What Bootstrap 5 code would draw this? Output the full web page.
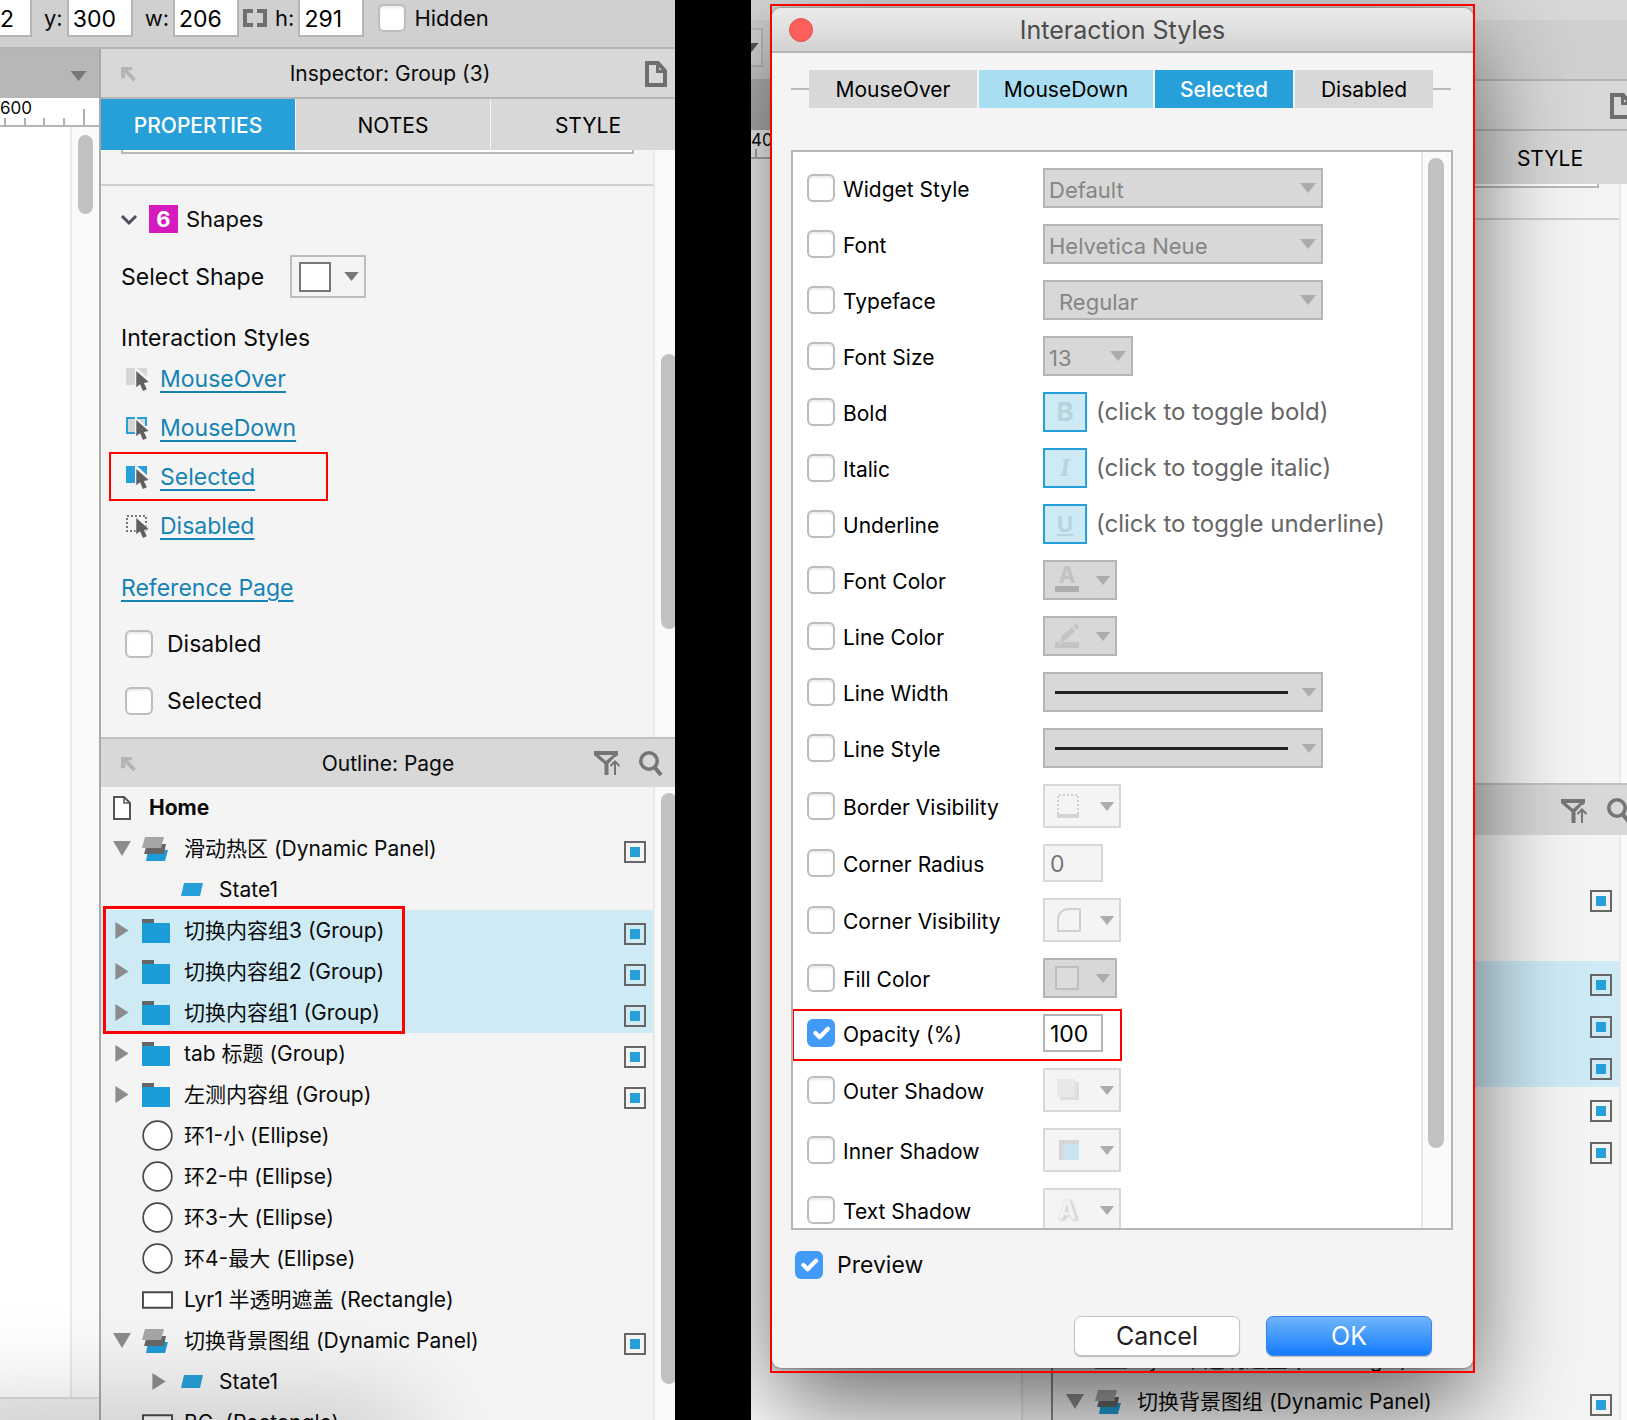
<!DOCTYPE html>
<html lang="en">
<head>
<meta charset="utf-8">
<meta name="viewport" content="width=device-width, initial-scale=1">
<title>Interaction Styles</title>
<link href="https://cdn.jsdelivr.net/npm/bootstrap@5.3.0/dist/css/bootstrap.min.css" rel="stylesheet">
<style>
:root{--ui-blue:#279fd8;--ui-pale:#cdeaf5;--ui-bar:#d8d8d8;--ui-line:#b5b5b5;--ui-panel:#f4f4f4}
body{background:#000;color:#0a0a0a;font:22px/28px Inter,"Noto Sans CJK SC",sans-serif}
button,input,select{font-family:inherit}
svg{display:block;flex:none;overflow:visible}
.board{gap:76px}
.shot{position:relative;overflow:hidden;min-width:0;background:var(--ui-panel)}
.shot-a{flex:675 1 0}
.shot-b{flex:876 1 0}
/* toolbar */
.tools{height:49px;background:#d0d0d0;border-bottom:2px solid var(--ui-line);padding-bottom:11px;flex:none}
.tools label{line-height:36px}
.num{width:66px;height:37px;border:2px solid var(--ui-line);border-top:0;border-radius:0;padding:4px 4px 0;font-size:23px;color:#000;background:#fff}
.num-first{width:32px;border-left:0;padding-left:0}
.tick{float:none!important;margin:0!important;width:28px;height:28px;flex:none;border:2px solid #bdbdbd;border-radius:6px!important;background-color:#fff;box-shadow:inset 0 2px 2px #ececec}
.tools .tick{margin-left:14px!important}
.tick:checked{border-color:#429bf9;background-color:#429bf9;box-shadow:none;background-size:28px 28px;--bs-form-check-bg-image:url("data:image/svg+xml,%3Csvg xmlns='http://www.w3.org/2000/svg' viewBox='0 0 28 28'%3E%3Cpath d='M8 15l4 6L20 7' fill='none' stroke='%23fff' stroke-width='3' stroke-linecap='round' stroke-linejoin='round'/%3E%3C/svg%3E");background-image:var(--bs-form-check-bg-image)}
/* canvas side */
.canvas-col{width:101px;flex:none;border-right:2px solid #a9a9a9}
.canvas-top{height:49px;background:#b7b7b7;padding:4px 12px 0}
.ruler{height:29px;background:#fff;border-bottom:2px solid var(--ui-line);font-size:17px;line-height:20px;overflow:hidden}
.track{background:#fafafa;border-left:2px solid #e8e8e8;flex:none}
.thumb{background:#c1c1c1;border-radius:8px}
.foot{height:23px;border-top:2px solid #dedede;background:#f2f2f2}
/* panels */
.phead{height:50px;background:var(--ui-bar);border-bottom:2px solid var(--ui-line);flex:none;padding-top:2px;font-size:21px}
.phead-side{width:90px}
.outline-head{border-top:2px solid #c2c2c2;border-bottom:0}
.ptabs{height:51px;flex:none;gap:1px;background:#f4f4f4}
.ptab{border:0;background:var(--ui-bar);width:194px;flex:none;color:#000;font-size:21px;padding-top:4px}
.ptab.on{background:var(--ui-blue);color:#fff;font-weight:500}
.props{padding:0 0 22px 20px}
.cut-box{height:4px;border:2px solid #b8b8b8;border-top:0;background:#fff;width:513px}
.props hr{margin:30px 0 19px -20px;border:0;border-top:2px solid #cfcfcf;opacity:1}
.count{width:29px;height:28px;background:#d51bbd;color:#fff;line-height:28px;margin:0 8px 0 12px}
.shape-row{margin-top:22px;gap:26px}
.shape-btn{width:76px;height:43px;border:2px solid #bdbdbd;background:transparent;padding:0 5px 0 7px}
.t23{font-size:23px}
.lnk{color:#1583b5;text-decoration:underline;text-decoration-thickness:2px;text-underline-offset:4px;font-size:23px}
.style-list{padding-top:2px}
.style-item{height:49px;padding-left:5px;gap:11px}
.ref-page{padding:24px 0 28px}
.state-checks{gap:29px}
.state-checks label{margin-left:14px}
.red-frame{position:absolute;border:2px solid red;pointer-events:none}
.rf-sel{left:-12px;top:0;width:219px;height:49px}
.rf-group{left:2px;top:-4px;width:302px;height:128px;border-width:3px}
/* outline tree */
.tree-row{height:41px;padding-left:12px;padding-right:7px}
.shot-b .tree-row{height:42px;padding-left:13px}
.picked{background:var(--ui-pale)}
.c-tri{width:29px;flex:none}
.c-ico{width:31px;flex:none}
.tree-row .nm{margin-left:11px;font-size:21px;white-space:nowrap}
.flag{width:22px;height:22px;border:2px solid #666;padding:4px;margin:6px 0 0 auto;flex:none;background-clip:content-box;background-color:var(--ui-blue)}
.glow{position:absolute;left:-60px;width:460px;height:60px;top:100%;box-shadow:0 0 100px 10px rgba(0,0,0,.22);pointer-events:none}
/* back window */
.b-top{height:20px;background:var(--ui-bar)}
.b-tools{height:61px;background:#d0d0d0;border-bottom:2px solid var(--ui-line);padding-top:8px}
.b-drop{width:12px;height:39px;border:2px solid #bbb;border-left:0;background:var(--ui-bar);overflow:hidden}
.b-canvas{width:302px;flex:none;border-right:2px solid #8c8c8c}
.b-side{width:592px;flex:none}
.b-props{height:602px}
/* dialog */
.dlg-frame{position:absolute;left:19px;top:4px;bottom:47px;width:705px;padding:4px 2px 5px}
.dlg-frame>.red-frame{inset:0}
.dlg{height:100%;border-radius:9px;background:#f4f4f4;box-shadow:0 36px 100px rgba(0,0,0,.6),0 0 3px #666}
.dlg-title{height:45px;border-radius:9px 9px 0 0;background:linear-gradient(#ebebeb,#d3d3d3);border-bottom:2px solid #b3b3b3;color:#4c4c4c;font-size:25px;padding:1px 17px 0;flex:none}
.dot{width:24px;height:24px;border-radius:50%;background:#fc605c;border:1px solid #e2504c;padding:0}
.dlg-tabs{margin:17px 20px 42px 19px;flex:none}
.dlg-tabs .rule{height:2px;background:#bbb;width:18px}
.dtab{border:0;height:38px;background:var(--ui-bar);color:#000;font-size:21px;padding:2px 0 0;width:138px}
.dtab.w1{width:168px}.dtab.w2{width:174px;background:#a9ddf2}
.dtab.on{background:var(--ui-blue);color:#fff;font-weight:500}
.listbox{margin:0 20px 0 19px;border:2px solid var(--ui-line);background:#fff;min-height:0}
.opts{padding:16px 0 0 14px;gap:16px;min-width:0;overflow:hidden}
.opt{position:relative;flex:none}
.opt>label{width:200px;margin-left:8px;padding-top:4px;flex:none;font-size:21px;color:#000}
.hint{font-size:24px;color:#666;margin-left:9px;white-space:nowrap}
.fsel{width:280px;height:40px;border:2px solid var(--ui-line);border-radius:0;padding:3px 24px 0 4px;color:#858585;font-size:22px;line-height:32px;background-color:var(--ui-bar)!important;background-position:right 4px center;background-size:18px 10px;--bs-form-select-bg-img:url("data:image/svg+xml,%3Csvg xmlns='http://www.w3.org/2000/svg' viewBox='0 0 18 10'%3E%3Cpath d='M1 0h16l-8 10z' fill='%23acacac'/%3E%3C/svg%3E")}
.fsel-s{width:90px}
.fsel-in{padding-left:14px}
.tgl{width:44px;height:40px;border:2px solid var(--ui-blue);background:var(--ui-pale);color:#b9d3dd;font-size:26px;font-weight:700;line-height:34px;padding:0}
.tgl-i{font-family:"Liberation Serif",serif;font-style:italic}
.tgl-u{font-size:22px;text-decoration:underline}
.ibtn{border:2px solid var(--ui-line);background:var(--ui-bar);height:40px;width:74px;padding:0 4px 0 10px}
.ibtn-l{width:78px;height:44px;background:#f4f4f4;border-color:#d8d8d8}
.ibtn-w{width:280px}
.stroke-line{height:3px;width:233px;background:#222}
.fnum{width:60px;height:38px;border:2px solid var(--ui-line);border-radius:0;padding:2px 5px 0;font-size:23px;color:#000}
.fnum:disabled{background:#f4f4f4;border-color:#d8d8d8;color:#777}
.rf-op{left:-15px;top:-5px;width:330px;height:52px}
.dlg-foot{padding:21px 41px 12px 23px;flex:none}
.dlg-foot label{margin-left:14px}
.dlg-btns{gap:26px;margin-top:37px}
.mac{width:166px;height:40px;border-radius:7px;border:1px solid #c4c4c4;background:#fff;color:#222;font-size:25px;padding:0;box-shadow:0 1px 1px #bbb}
.mac-ok{border-color:#3a86e8;background:linear-gradient(#6fb5fa,#157cfd);color:#fff}
</style>
<script src="https://cdn.jsdelivr.net/npm/bootstrap@5.3.0/dist/js/bootstrap.bundle.min.js"></script>
</head>
<body>
<svg width="0" height="0" class="position-absolute" aria-hidden="true">
  <symbol id="down" viewBox="0 0 18 15"><path d="M0 0h18L9 15z" fill="#8c8c8c"/></symbol>
  <symbol id="right" viewBox="0 0 18 18"><path d="M2 0l14 9L2 18z" fill="#8c8c8c"/></symbol>
  <symbol id="caret" viewBox="0 0 16 10"><path d="M0 0h16L8 10z" fill="currentColor"/></symbol>
  <symbol id="nw" viewBox="0 0 16 16"><path d="M0 0h12v3.500H7.500l8.500 9-3 3-8.500-9V12H0z" fill="#b5b5b5"/></symbol>
  <symbol id="panel" viewBox="0 0 28 24"><path d="M6 13h20l-3 11H4z" fill="#1d9bd6"/><path d="M5 7h19l-2 10H2z" fill="#666"/><path d="M3 0h19l-3 11H0z" fill="#a6a6a6"/></symbol>
  <symbol id="state" viewBox="0 0 22 13"><path d="M3 0h19l-3 13H0z" fill="#279fd8"/></symbol>
  <symbol id="folder" viewBox="0 0 28 24"><path d="M0 0h12v5H0z" fill="#666"/><path d="M0 4h28v20H0z" fill="#1a9dd9"/></symbol>
  <symbol id="ring" viewBox="0 0 32 32"><circle cx="16" cy="16" r="14.800" fill="#fff" stroke="#4a4a4a" stroke-width="1.800"/></symbol>
  <symbol id="rect" viewBox="0 0 32 18"><path d="M1 1h30v16H1z" fill="#fff" stroke="#4a4a4a" stroke-width="2"/></symbol>
  <symbol id="page" viewBox="0 0 18 24"><path d="M1 1h10l6 6v16H1z" fill="#fff" stroke="#555" stroke-width="2"/><path d="M11 1v6h6" fill="none" stroke="#555" stroke-width="1.500"/></symbol>
  <symbol id="doc" viewBox="0 0 22 26"><path d="M2 2h11l7 8v14H2z" fill="none" stroke="#6e6e6e" stroke-width="4"/><path d="M12.500 2v8.500H20" fill="none" stroke="#6e6e6e" stroke-width="3"/></symbol>
  <symbol id="filter" viewBox="0 0 26 24"><path d="M0 0h24v4l-9.500 9V24h-4V13L0 4z" fill="#757575"/><path d="M5 4h14l-7 6z" fill="#d8d8d8"/><path d="M16 15l5-5.500 5 5.500M21 10v14" stroke="#d8d8d8" stroke-width="5" fill="none"/><path d="M16.500 15l4.500-4.500 4.500 4.500M21 10.500V24" stroke="#757575" stroke-width="2" fill="none"/></symbol>
  <symbol id="lens" viewBox="0 0 24 26"><circle cx="10" cy="10" r="8.200" fill="none" stroke="#757575" stroke-width="3.600"/><path d="M15.500 16l6.500 8" stroke="#757575" stroke-width="4"/></symbol>
  <symbol id="arrow" viewBox="0 0 14 22"><path d="M1 0v17l4-3 3 7 4-2-3-6.500 5-1z" fill="#606060" stroke="#f4f4f4" stroke-width="1.500" paint-order="stroke"/></symbol>
</svg>

<main class="board d-flex vh-100">
  <section class="shot shot-a d-flex flex-column">
    <div class="tools d-flex align-items-center">
      <input class="num num-first" aria-label="x" value="2">
      <label for="fy" class="ms-2 ps-1 pe-1">y:</label><input class="num" id="fy" value="300">
      <label for="fw" class="ms-2 pe-1 ps-1">w:</label><input class="num" id="fw" value="206">
      <svg class="ms-1" width="24" height="18" viewBox="0 0 24 18"><path d="M10 2H2v14h8M14 2h8v14h-8" fill="none" stroke="#6e6e6e" stroke-width="4"/></svg>
      <label for="fh" class="ms-1 ps-1 pe-1">h:</label><input class="num" id="fh" value="291">
      <input type="checkbox" class="form-check-input tick" id="fhid"><label for="fhid" class="ms-2">Hidden</label>
    </div>
    <div class="d-flex flex-fill" style="min-height:0">
      <div class="canvas-col d-flex flex-column">
        <div class="canvas-top d-flex align-items-center justify-content-end"><svg width="17" height="10" color="#777"><use href="#caret"/></svg></div>
        <div class="ruler position-relative">600
          <svg class="position-absolute bottom-0 start-0" width="99" height="16"><path d="M5 9v7M25 9v7M44 9v7M64 9v7M84 0v16" stroke="#b0b0b0" stroke-width="2"/></svg></div>
        <div class="d-flex flex-fill">
          <div class="flex-fill bg-white"></div>
          <div class="track" style="width:29px"><div class="thumb mx-auto mt-2" style="width:15px;height:79px"></div></div>
        </div>
        <div class="foot"></div>
      </div>
      <div class="flex-fill d-flex flex-column" style="min-width:0">
        <div class="phead d-flex align-items-center">
          <div class="phead-side ps-3 ms-1"><svg width="15" height="15"><use href="#nw"/></svg></div>
          <div class="flex-fill text-center">Inspector: Group (3)</div>
          <div class="phead-side pe-2 d-flex justify-content-end"><svg width="22" height="26"><use href="#doc"/></svg></div>
        </div>
        <div class="ptabs d-flex overflow-hidden">
          <button class="ptab on">PROPERTIES</button><button class="ptab">NOTES</button><button class="ptab">STYLE</button>
        </div>
        <div class="d-flex">
          <div class="props flex-fill">
            <div class="cut-box"></div>
            <hr>
            <div class="d-flex align-items-center">
              <svg width="16" height="11" viewBox="0 0 16 11"><path d="M1 2l7 7 7-7" fill="none" stroke="#4a4f5a" stroke-width="3"/></svg>
              <span class="count text-center fw-bold">6</span>Shapes
            </div>
            <div class="shape-row d-flex align-items-center t23">
              <span id="shp">Select Shape</span>
              <button class="shape-btn d-flex align-items-center justify-content-between" aria-labelledby="shp"><svg width="32" height="30"><path d="M1 1h30v28H1z" fill="#fff" stroke="#777" stroke-width="2"/></svg><svg width="15" height="9" color="#777"><use href="#caret"/></svg></button>
            </div>
            <div class="t23" style="margin-top:26px">Interaction Styles</div>
            <div class="style-list">
              <div class="style-item d-flex align-items-center"><svg width="23" height="22"><path d="M0 0h9v17H0zM11 0h10v9z" fill="#d6d6d6"/><use href="#arrow" x="9" y="3" width="14" height="21"/></svg><a class="lnk" href="#">MouseOver</a></div>
              <div class="style-item d-flex align-items-center"><svg width="23" height="22"><path d="M9 1H1v15h8M11 1h9v8" fill="#d6d6d6" stroke="#279fd8" stroke-width="2"/><use href="#arrow" x="9" y="3" width="14" height="21"/></svg><a class="lnk" href="#">MouseDown</a></div>
              <div class="style-item d-flex align-items-center position-relative"><svg width="23" height="22"><path d="M0 0h9v17H0zM11 0h10v9z" fill="#279fd8"/><use href="#arrow" x="9" y="3" width="14" height="21"/></svg><a class="lnk" href="#">Selected</a><i class="red-frame rf-sel"></i></div>
              <div class="style-item d-flex align-items-center"><svg width="23" height="22"><path d="M1 1h19v15H1z" fill="none" stroke="#777" stroke-width="2" stroke-dasharray="2 2"/><use href="#arrow" x="9" y="3" width="14" height="21"/></svg><a class="lnk" href="#">Disabled</a></div>
            </div>
            <div class="ref-page"><a class="lnk" href="#">Reference Page</a></div>
            <div class="state-checks d-flex flex-column ps-1 t23">
              <div class="d-flex align-items-center"><input type="checkbox" class="form-check-input tick" id="cd"><label for="cd">Disabled</label></div>
              <div class="d-flex align-items-center"><input type="checkbox" class="form-check-input tick" id="cs"><label for="cs">Selected</label></div>
            </div>
          </div>
          <div class="track" style="width:22px"><div class="thumb" style="width:16px;height:275px;margin:204px 0 0 6px"></div></div>
        </div>
        <div class="phead outline-head d-flex align-items-center">
          <div class="phead-side ps-3 ms-1"><svg width="15" height="15"><use href="#nw"/></svg></div>
          <div class="flex-fill text-center">Outline: Page</div>
          <div class="phead-side pe-2 me-1 d-flex justify-content-end" style="gap:19px"><svg width="26" height="24"><use href="#filter"/></svg><svg width="24" height="26"><use href="#lens"/></svg></div>
        </div>
        <div class="d-flex flex-fill" style="min-height:0">
          <div class="flex-fill overflow-hidden">
            <div class="tree-row d-flex align-items-center"><svg width="18" height="24"><use href="#page"/></svg><span class="nm fw-bold" style="margin-left:18px">Home</span></div>
            <div class="tree-row d-flex align-items-center"><div class="c-tri"><svg width="18" height="15"><use href="#down"/></svg></div><div class="c-ico"><svg width="28" height="24"><use href="#panel"/></svg></div><span class="nm">滑动热区 (Dynamic Panel)</span><i class="flag"></i></div>
            <div class="tree-row d-flex align-items-center"><div class="c-tri"></div><div class="c-ico"></div><svg class="ms-2" width="22" height="13"><use href="#state"/></svg><span class="nm ms-3">State1</span></div>
            <div class="position-relative">
              <div class="tree-row picked d-flex align-items-center"><div class="c-tri"><svg width="18" height="17"><use href="#right"/></svg></div><div class="c-ico"><svg width="28" height="24"><use href="#folder"/></svg></div><span class="nm">切换内容组3 (Group)</span><i class="flag"></i></div>
              <div class="tree-row picked d-flex align-items-center"><div class="c-tri"><svg width="18" height="17"><use href="#right"/></svg></div><div class="c-ico"><svg width="28" height="24"><use href="#folder"/></svg></div><span class="nm">切换内容组2 (Group)</span><i class="flag"></i></div>
              <div class="tree-row picked d-flex align-items-center"><div class="c-tri"><svg width="18" height="17"><use href="#right"/></svg></div><div class="c-ico"><svg width="28" height="24"><use href="#folder"/></svg></div><span class="nm">切换内容组1 (Group)</span><i class="flag"></i></div>
              <i class="red-frame rf-group"></i>
            </div>
            <div class="tree-row d-flex align-items-center"><div class="c-tri"><svg width="18" height="17"><use href="#right"/></svg></div><div class="c-ico"><svg width="28" height="24"><use href="#folder"/></svg></div><span class="nm">tab 标题 (Group)</span><i class="flag"></i></div>
            <div class="tree-row d-flex align-items-center"><div class="c-tri"><svg width="18" height="17"><use href="#right"/></svg></div><div class="c-ico"><svg width="28" height="24"><use href="#folder"/></svg></div><span class="nm">左测内容组 (Group)</span><i class="flag"></i></div>
            <div class="tree-row d-flex align-items-center"><div class="c-tri"></div><svg width="31" height="31"><use href="#ring"/></svg><span class="nm">环1-小 (Ellipse)</span></div>
            <div class="tree-row d-flex align-items-center"><div class="c-tri"></div><svg width="31" height="31"><use href="#ring"/></svg><span class="nm">环2-中 (Ellipse)</span></div>
            <div class="tree-row d-flex align-items-center"><div class="c-tri"></div><svg width="31" height="31"><use href="#ring"/></svg><span class="nm">环3-大 (Ellipse)</span></div>
            <div class="tree-row d-flex align-items-center"><div class="c-tri"></div><svg width="31" height="31"><use href="#ring"/></svg><span class="nm">环4-最大 (Ellipse)</span></div>
            <div class="tree-row d-flex align-items-center"><div class="c-tri"></div><svg width="31" height="18"><use href="#rect"/></svg><span class="nm">Lyr1 半透明遮盖 (Rectangle)</span></div>
            <div class="tree-row d-flex align-items-center"><div class="c-tri"><svg width="18" height="15"><use href="#down"/></svg></div><div class="c-ico"><svg width="28" height="24"><use href="#panel"/></svg></div><span class="nm">切换背景图组 (Dynamic Panel)</span><i class="flag"></i></div>
            <div class="tree-row d-flex align-items-center"><div class="c-tri"></div><div class="c-ico ps-1"><svg class="ms-1" width="18" height="17"><use href="#right"/></svg></div><svg class="ms-2" width="22" height="13"><use href="#state"/></svg><span class="nm ms-3">State1</span></div>
            <div class="tree-row d-flex align-items-center"><div class="c-tri"></div><svg width="31" height="18"><use href="#rect"/></svg><span class="nm">BG&nbsp; (Rectangle)</span></div>
          </div>
          <div class="track" style="width:22px"><div class="thumb" style="width:16px;height:591px;margin:6px 0 0 6px"></div></div>
        </div>
      </div>
    </div>
    <div class="glow"></div>
  </section>

  <section class="shot shot-b d-flex flex-column">
    <div class="b-top flex-shrink-0"></div>
    <div class="b-tools flex-shrink-0"><div class="b-drop d-flex align-items-center"><svg width="8" height="9" viewBox="8 0 8 10" color="#555" overflow="hidden"><use href="#caret" width="16" height="10"/></svg></div></div>
    <div class="d-flex flex-fill" style="min-height:0">
      <div class="b-canvas d-flex flex-column">
        <div class="canvas-top"></div>
        <div class="ruler position-relative">400<svg class="position-absolute bottom-0 start-0" width="99" height="8"><path d="M5 0v8M25 0v8" stroke="#b0b0b0" stroke-width="2"/></svg></div>
        <div class="d-flex flex-fill"><div class="flex-fill bg-white"></div><div class="track" style="width:30px"></div></div>
      </div>
      <div class="b-side d-flex flex-column">
        <div class="phead d-flex align-items-center justify-content-end pe-2"><svg class="me-1" width="24" height="26"><use href="#doc"/></svg></div>
        <div class="ptabs d-flex justify-content-end" style="height:53px;background:var(--ui-bar)"><button class="ptab" style="width:190px">STYLE</button></div>
        <div class="b-props d-flex">
          <div class="props flex-fill"><div class="cut-box" style="width:526px"></div><hr></div>
          <div class="track" style="width:26px"></div>
        </div>
        <div class="phead outline-head d-flex align-items-center justify-content-end" style="height:52px;gap:20px;padding-right:14px"><svg width="26" height="24"><use href="#filter"/></svg><svg width="24" height="26"><use href="#lens"/></svg></div>
        <div class="d-flex flex-fill" style="min-height:0">
          <div class="flex-fill overflow-hidden">
            <div class="tree-row"></div>
            <div class="tree-row d-flex align-items-center"><i class="flag"></i></div>
            <div class="tree-row"></div>
            <div class="tree-row picked d-flex align-items-center"><i class="flag"></i></div>
            <div class="tree-row picked d-flex align-items-center"><i class="flag"></i></div>
            <div class="tree-row picked d-flex align-items-center"><i class="flag"></i></div>
            <div class="tree-row d-flex align-items-center"><i class="flag"></i></div>
            <div class="tree-row d-flex align-items-center"><i class="flag"></i></div>
            <div class="tree-row"></div><div class="tree-row"></div><div class="tree-row"></div><div class="tree-row"></div>
            <div class="tree-row d-flex align-items-center"><div class="c-tri"></div><svg width="32" height="18"><use href="#rect"/></svg><span class="nm">Lyr1 半透明遮盖 (Rectangle)</span></div>
            <div class="tree-row d-flex align-items-center"><div class="c-tri"><svg width="18" height="15"><use href="#down"/></svg></div><div class="c-ico"><svg width="28" height="24"><use href="#panel"/></svg></div><span class="nm">切换背景图组 (Dynamic Panel)</span><i class="flag"></i></div>
          </div>
          <div class="track" style="width:26px"></div>
        </div>
      </div>
    </div>

    <div class="dlg-frame">
      <div class="dlg d-flex flex-column" role="dialog" aria-labelledby="dt">
        <div class="dlg-title d-flex align-items-center"><button class="dot" aria-label="Close"></button><div id="dt" class="flex-fill text-center pe-4">Interaction Styles</div></div>
        <div class="dlg-tabs d-flex align-items-center">
          <span class="rule"></span>
          <div class="d-flex" style="gap:2px"><button class="dtab w1">MouseOver</button><button class="dtab w2">MouseDown</button><button class="dtab on">Selected</button><button class="dtab">Disabled</button></div>
          <span class="rule"></span>
        </div>
        <div class="listbox d-flex flex-fill">
          <div class="opts d-flex flex-column flex-fill">
            <div class="opt d-flex align-items-center"><input type="checkbox" class="form-check-input tick" id="o1"><label for="o1">Widget Style</label><select class="form-select fsel" disabled aria-label="Widget Style"><option>Default</option></select></div>
            <div class="opt d-flex align-items-center"><input type="checkbox" class="form-check-input tick" id="o2"><label for="o2">Font</label><select class="form-select fsel" disabled aria-label="Font"><option>Helvetica Neue</option></select></div>
            <div class="opt d-flex align-items-center"><input type="checkbox" class="form-check-input tick" id="o3"><label for="o3">Typeface</label><select class="form-select fsel fsel-in" disabled aria-label="Typeface"><option>Regular</option></select></div>
            <div class="opt d-flex align-items-center"><input type="checkbox" class="form-check-input tick" id="o4"><label for="o4">Font Size</label><select class="form-select fsel fsel-s" disabled aria-label="Font Size"><option>13</option></select></div>
            <div class="opt d-flex align-items-center"><input type="checkbox" class="form-check-input tick" id="o5"><label for="o5">Bold</label><button class="tgl">B</button><span class="hint">(click to toggle bold)</span></div>
            <div class="opt d-flex align-items-center"><input type="checkbox" class="form-check-input tick" id="o6"><label for="o6">Italic</label><button class="tgl tgl-i">I</button><span class="hint">(click to toggle italic)</span></div>
            <div class="opt d-flex align-items-center"><input type="checkbox" class="form-check-input tick" id="o7"><label for="o7">Underline</label><button class="tgl tgl-u">U</button><span class="hint">(click to toggle underline)</span></div>
            <div class="opt d-flex align-items-center"><input type="checkbox" class="form-check-input tick" id="o8"><label for="o8">Font Color</label><button class="ibtn d-flex align-items-center justify-content-between" disabled aria-label="Font Color"><svg width="24" height="26"><text x="12" y="16" text-anchor="middle" font-size="23" font-weight="700" fill="#c2c2c2">A</text><path d="M0 19h24v6H0z" fill="#acacac"/></svg><svg width="16" height="9" color="#acacac"><use href="#caret"/></svg></button></div>
            <div class="opt d-flex align-items-center"><input type="checkbox" class="form-check-input tick" id="o9"><label for="o9">Line Color</label><button class="ibtn d-flex align-items-center justify-content-between" disabled aria-label="Line Color"><svg width="24" height="26"><path d="M0 19h24v6H0z" fill="#c4c4c4"/><path d="M4 21l2-8L17 4l4 4L10 18z" fill="#c4c4c4" stroke="#d8d8d8" stroke-width="1"/><path d="M18 3l3-3 3 4-2 3z" fill="#c4c4c4"/></svg><svg width="16" height="9" color="#acacac"><use href="#caret"/></svg></button></div>
            <div class="opt d-flex align-items-center"><input type="checkbox" class="form-check-input tick" id="o10"><label for="o10">Line Width</label><button class="ibtn ibtn-w d-flex align-items-center justify-content-between" disabled aria-label="Line Width"><span class="stroke-line"></span><svg width="16" height="9" color="#acacac"><use href="#caret"/></svg></button></div>
            <div class="opt d-flex align-items-center"><input type="checkbox" class="form-check-input tick" id="o11"><label for="o11">Line Style</label><button class="ibtn ibtn-w d-flex align-items-center justify-content-between" disabled aria-label="Line Style"><span class="stroke-line"></span><svg width="16" height="9" color="#acacac"><use href="#caret"/></svg></button></div>
            <div class="opt d-flex align-items-center"><input type="checkbox" class="form-check-input tick" id="o12"><label for="o12">Border Visibility</label><button class="ibtn ibtn-l d-flex align-items-center justify-content-between" disabled aria-label="Border Visibility"><svg width="24" height="24"><path d="M3 20V1h20v19" fill="none" stroke="#d0d0d0" stroke-width="2" stroke-dasharray="2 2"/><path d="M2 20h22v4H2z" fill="#d4d4d4"/></svg><svg width="16" height="9" color="#acacac"><use href="#caret"/></svg></button></div>
            <div class="opt d-flex align-items-center"><input type="checkbox" class="form-check-input tick" id="o13"><label for="o13">Corner Radius</label><input class="fnum" value="0" disabled aria-label="Corner Radius"></div>
            <div class="opt d-flex align-items-center"><input type="checkbox" class="form-check-input tick" id="o14"><label for="o14">Corner Visibility</label><button class="ibtn ibtn-l d-flex align-items-center justify-content-between" disabled aria-label="Corner Visibility"><svg width="26" height="24"><path d="M3 23V13Q3 1 15 1h10v22z" fill="none" stroke="#d0d0d0" stroke-width="2"/></svg><svg width="16" height="9" color="#acacac"><use href="#caret"/></svg></button></div>
            <div class="opt d-flex align-items-center"><input type="checkbox" class="form-check-input tick" id="o15"><label for="o15">Fill Color</label><button class="ibtn d-flex align-items-center justify-content-between" disabled aria-label="Fill Color"><svg width="24" height="24"><path d="M1 1h22v22H1z" fill="#dcdcdc" stroke="#bebebe" stroke-width="2"/></svg><svg width="16" height="9" color="#acacac"><use href="#caret"/></svg></button></div>
            <div class="opt d-flex align-items-center"><input type="checkbox" class="form-check-input tick" id="o16" checked><label for="o16">Opacity (%)</label><input class="fnum" value="100" aria-label="Opacity"><i class="red-frame rf-op"></i></div>
            <div class="opt d-flex align-items-center"><input type="checkbox" class="form-check-input tick" id="o17"><label for="o17">Outer Shadow</label><button class="ibtn ibtn-l d-flex align-items-center justify-content-between" disabled aria-label="Outer Shadow"><svg width="26" height="26"><path d="M5 5h19v18H5z" fill="#dedede"/><path d="M2 2h18v18H2z" fill="#e8e8e8"/></svg><svg width="16" height="9" color="#acacac"><use href="#caret"/></svg></button></div>
            <div class="opt d-flex align-items-center"><input type="checkbox" class="form-check-input tick" id="o18"><label for="o18">Inner Shadow</label><button class="ibtn ibtn-l d-flex align-items-center justify-content-between" disabled aria-label="Inner Shadow"><svg width="26" height="20"><path d="M4 0h20v20H4z" fill="#d6d6d6"/><path d="M8 4h16v16H8z" fill="#cbe3ee"/></svg><svg width="16" height="9" color="#acacac"><use href="#caret"/></svg></button></div>
            <div class="opt d-flex align-items-center"><input type="checkbox" class="form-check-input tick" id="o19"><label for="o19">Text Shadow</label><button class="ibtn ibtn-l d-flex align-items-center justify-content-between" disabled aria-label="Text Shadow"><svg width="26" height="22" font-size="25" font-weight="700" style="filter:drop-shadow(2px 1px 1px #ccc)"><text x="12" y="20" text-anchor="middle" fill="#f4f4f4" stroke="#e6e6e6">A</text></svg><svg width="16" height="9" color="#acacac"><use href="#caret"/></svg></button></div>
          </div>
          <div class="track" style="width:30px"><div class="thumb" style="width:16px;height:92%;margin:6px 0 0 5px"></div></div>
        </div>
        <div class="dlg-foot">
          <div class="d-flex align-items-center t23"><input type="checkbox" class="form-check-input tick" id="pv" checked><label for="pv">Preview</label></div>
          <div class="dlg-btns d-flex justify-content-end"><button class="mac">Cancel</button><button class="mac mac-ok">OK</button></div>
        </div>
      </div>
      <i class="red-frame"></i>
    </div>
  </section>
</main>
</body>
</html>
